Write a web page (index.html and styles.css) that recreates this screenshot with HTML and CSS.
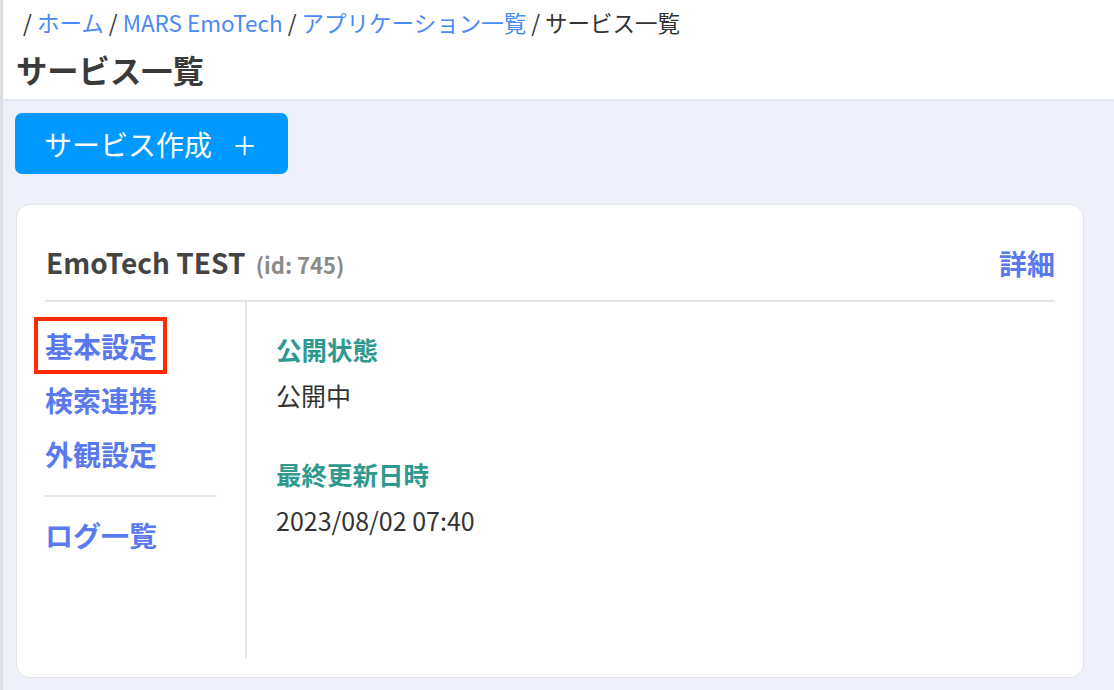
FILE: index.html
```html
<!DOCTYPE html>
<html lang="ja">
<head>
<meta charset="utf-8">
<title>サービス一覧</title>
<link rel="stylesheet" href="styles.css">
</head>
<body>
<div class="page">
  <header class="header">
    <nav class="breadcrumb">
      <span class="sep">/</span> <a href="#">ホーム</a> <span class="sep">/</span> <a href="#">MARS EmoTech</a> <span class="sep">/</span> <a href="#">アプリケーション一覧</a> <span class="sep">/</span> <span class="current">サービス一覧</span>
    </nav>
    <h1 class="title">サービス一覧</h1>
  </header>
  <main class="main">
    <button class="create-btn" type="button"><span class="create-label">サービス作成</span><span class="create-plus">＋</span></button>
    <section class="card">
      <div class="card-head">
        <div class="card-title">EmoTech TEST <span class="card-id">(id: 745)</span></div>
        <a class="detail-link" href="#">詳細</a>
      </div>
      <div class="card-body">
        <aside class="side-nav">
          <a class="nav-item highlight" href="#">基本設定</a>
          <a class="nav-item" href="#">検索連携</a>
          <a class="nav-item" href="#">外観設定</a>
          <hr class="nav-sep">
          <a class="nav-item nav-log" href="#">ログ一覧</a>
        </aside>
        <div class="content">
          <div class="field-label">公開状態</div>
          <div class="field-value">公開中</div>
          <div class="field-label field-label-2">最終更新日時</div>
          <div class="field-value">2023/08/02 07:40</div>
        </div>
      </div>
    </section>
  </main>
</div>
</body>
</html>
```

FILE: styles.css
```css
* { box-sizing: border-box; }

html, body {
  margin: 0;
  padding: 0;
}

body {
  background: #eef1f9;
  font-family: "Noto Sans CJK JP", "Noto Sans", sans-serif;
  color: #333;
  width: 1114px;
  height: 690px;
  overflow: hidden;
}

.page {
  border-left: 3px solid #dfe0e6;
  min-height: 690px;
}

.header {
  background: #fff;
  height: 99px;
  padding: 7px 0 0 13px;
  box-shadow: 0 1px 3px rgba(0, 0, 0, 0.08);
  position: relative;
}

.breadcrumb {
  font-size: 22.5px;
  line-height: 30px;
  padding-left: 7px;
  color: #333;
  white-space: nowrap;
}

.breadcrumb a {
  color: #4a8af4;
  text-decoration: none;
}

.title {
  margin: 13px 0 0 0;
  font-size: 31.3px;
  line-height: 40px;
  font-weight: 700;
  color: #3a3a3a;
}

.main {
  padding: 14px 30px 0 13px;
}

.create-btn {
  display: flex;
  align-items: center;
  width: 273px;
  height: 61px;
  margin-left: -1px;
  padding: 0 0 0 29px;
  border: none;
  border-radius: 7px;
  background: #0099ff;
  color: #fff;
  font-family: inherit;
  font-size: 28px;
  font-weight: 400;
  cursor: pointer;
}

.create-plus {
  margin-left: 20px;
  font-size: 25px;
}

.card {
  margin-top: 30px;
  background: #fff;
  border: 1px solid #e3e3e6;
  border-radius: 14px;
  padding: 0 28px 19px 28px;
}

.card-head {
  display: flex;
  align-items: center;
  justify-content: space-between;
  height: 97px;
  padding-top: 18px;
  border-bottom: 2px solid #e6e6e6;
}

.card-title {
  font-size: 28px;
  font-weight: 700;
  color: #444;
  padding-left: 1px;
}

.card-id {
  font-size: 22px;
  color: #8a8a8a;
  margin-left: 4px;
}

.detail-link {
  font-size: 28px;
  font-weight: 700;
  color: #5a79ef;
  text-decoration: none;
  padding-top: 2px;
}

.card-body {
  display: flex;
  height: 356px;
}

.side-nav {
  width: 202px;
  flex: none;
  padding: 17px 28px 0 0;
  border-right: 2px solid #e6e6e6;
  display: flex;
  flex-direction: column;
  align-items: flex-start;
}

.nav-item {
  font-size: 28px;
  line-height: 54px;
  font-weight: 700;
  color: #5a79ef;
  text-decoration: none;
}

.highlight {
  position: relative;
}

.highlight::after {
  content: "";
  position: absolute;
  left: -11px;
  right: -10px;
  top: -2px;
  bottom: -1px;
  border: 4px solid #ff2a00;
}

.nav-sep {
  align-self: stretch;
  margin: 14px 0 11px 0;
  border: none;
  border-top: 2px solid #e6e6e6;
  height: 0;
}

.content {
  padding: 29px 0 0 29px;
}

.field-label {
  font-size: 25.5px;
  line-height: 36px;
  font-weight: 700;
  color: #2e9a8f;
}

.field-value {
  font-size: 25px;
  line-height: 36px;
  margin-top: 10px;
  color: #333;
}

.field-label-2 {
  margin-top: 43px;
}
```
